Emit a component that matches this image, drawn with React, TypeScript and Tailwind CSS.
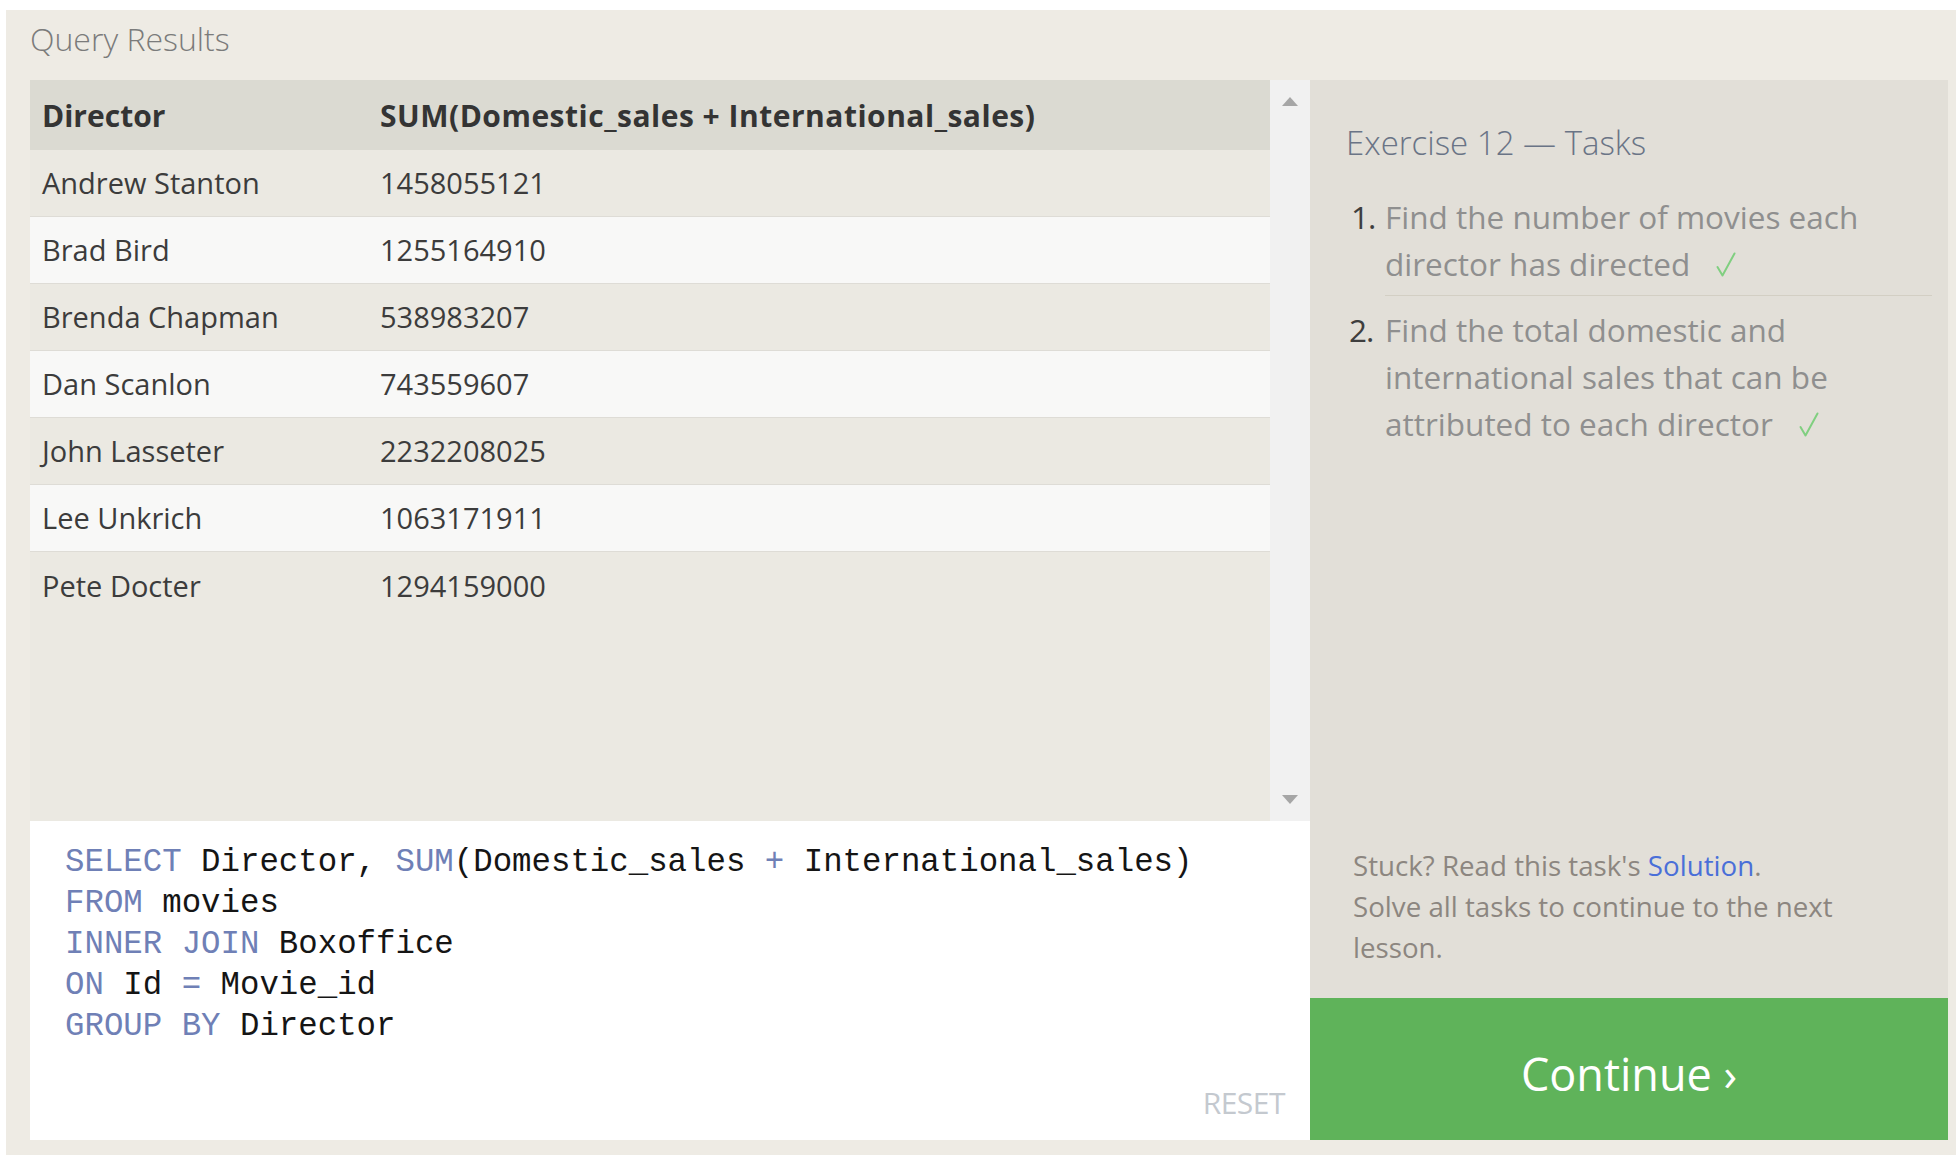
import React from 'react';

const rows: [string, string][] = [
  ['Andrew Stanton', '1458055121'],
  ['Brad Bird', '1255164910'],
  ['Brenda Chapman', '538983207'],
  ['Dan Scanlon', '743559607'],
  ['John Lasseter', '2232208025'],
  ['Lee Unkrich', '1063171911'],
  ['Pete Docter', '1294159000'],
];

const Kw = ({ children }: { children: React.ReactNode }) => (
  <span className="text-[#6f80b6]">{children}</span>
);

const Check = () => (
  <svg className="inline-block ml-[26px] align-[-2px]" width="20" height="26" viewBox="0 0 20 26" fill="none">
    <path d="M1.5 15 L6.5 23.5 L18.5 1.5" stroke="#80cf80" strokeWidth="2" strokeLinecap="round" strokeLinejoin="round" />
  </svg>
);

export default function App() {
  return (
    <div
      className="w-[1956px] h-[1156px] bg-white pt-[10px] pl-[6px] overflow-hidden"
      style={{ fontFamily: '"Open Sans", "Noto Sans", sans-serif' }}
    >
      <div className="h-[1145px] bg-[#eeebe4] flex flex-col">
        {/* header */}
        <div className="h-[70px] pl-[24px] pt-[8px] text-[32px] leading-[42px] text-[#7b7b7b] font-light">
          Query Results
        </div>

        <div className="flex pl-[24px] pr-[8px]">
          {/* left column: results + editor */}
          <div className="w-[1280px] flex flex-col">
            <div className="flex h-[741px]">
              <div className="w-[1240px] bg-[#ebe9e2] flex flex-col">
                <div className="h-[70px] bg-[#dbdad2] flex items-center text-[30px] font-bold text-[#343434]">
                  <div className="w-[350px] pl-[12px]">Director</div>
                  <div className="tracking-[0.5px]">SUM(Domestic_sales + International_sales)</div>
                </div>
                {rows.map(([name, total], i) => (
                  <div
                    key={name}
                    className={`h-[67px] flex items-center text-[29px] text-[#3c3c3c] ${
                      i < rows.length - 1 ? 'border-b border-[#dedcd6]' : ''
                    } ${i % 2 === 0 ? 'bg-[#ebe9e2]' : 'bg-[#f8f8f7]'}`}
                  >
                    <div className="w-[350px] pl-[12px]">{name}</div>
                    <div>{total}</div>
                  </div>
                ))}
              </div>
              {/* scrollbar */}
              <div className="w-[40px] bg-[#f1f1f1] flex flex-col items-center justify-between pt-[17px] pb-[17px]">
                <div className="w-0 h-0 border-l-[8px] border-r-[8px] border-b-[9px] border-l-transparent border-r-transparent border-b-[#a6a6a6]" />
                <div className="w-0 h-0 border-l-[8px] border-r-[8px] border-t-[9px] border-l-transparent border-r-transparent border-t-[#a6a6a6]" />
              </div>
            </div>

            {/* editor */}
            <div className="h-[319px] bg-white flex flex-col justify-between pl-[35px] pr-[25px] pt-[21px] pb-[22px]">
              <div
                className="text-[32.4px] leading-[41px] text-[#151515] whitespace-pre"
                style={{ fontFamily: '"Liberation Mono", "DejaVu Sans Mono", monospace' }}
              >
                <div>
                  <Kw>SELECT</Kw> Director, <Kw>SUM</Kw>(Domestic_sales <Kw>+</Kw> International_sales)
                </div>
                <div>
                  <Kw>FROM</Kw> movies
                </div>
                <div>
                  <Kw>INNER JOIN</Kw> Boxoffice
                </div>
                <div>
                  <Kw>ON</Kw> Id <Kw>=</Kw> Movie_id
                </div>
                <div>
                  <Kw>GROUP BY</Kw> Director
                </div>
              </div>
              <div className="self-end text-[30px] text-[#c4c9cf] leading-none tracking-[-0.5px]">RESET</div>
            </div>
          </div>

          {/* right column: tasks */}
          <div className="w-[638px] flex flex-col">
            <div className="h-[918px] bg-[#e2dfd8] flex flex-col justify-between pl-[36px] pr-[16px] pt-[42px] pb-[30px]">
              <div>
                <div className="text-[33px] text-[#6a7486] font-light leading-[42px]">Exercise 12 — Tasks</div>
                <ol className="mt-[29px] text-[31.5px] leading-[47px] text-[#8f8f8f]">
                  <li className="flex">
                    <span className="w-[39px] pl-[5px] text-[#3e3e3e] shrink-0 tracking-[-1px]">1.</span>
                    <div className="flex-1 pb-[8px] border-b border-[#d3cfc4]">
                      Find the number of movies each director has directed
                      <Check />
                    </div>
                  </li>
                  <li className="flex mt-[10px]">
                    <span className="w-[39px] pl-[3px] text-[#3e3e3e] shrink-0 tracking-[-1px]">2.</span>
                    <div className="flex-1">
                      Find the total domestic and international sales that can be attributed to each director
                      <Check />
                    </div>
                  </li>
                </ol>
              </div>
              <div className="pl-[7px] w-[540px] text-[27.7px] leading-[41px] text-[#8c8680]">
                Stuck? Read this task's <span className="text-[#4a6fd8]">Solution</span>.
                <br />
                Solve all tasks to continue to the next lesson.
              </div>
            </div>
            <div className="h-[142px] bg-[#5fb35a] flex items-center justify-center text-white text-[45px] pt-[10px]">
              Continue ›
            </div>
          </div>
        </div>
      </div>
    </div>
  );
}
